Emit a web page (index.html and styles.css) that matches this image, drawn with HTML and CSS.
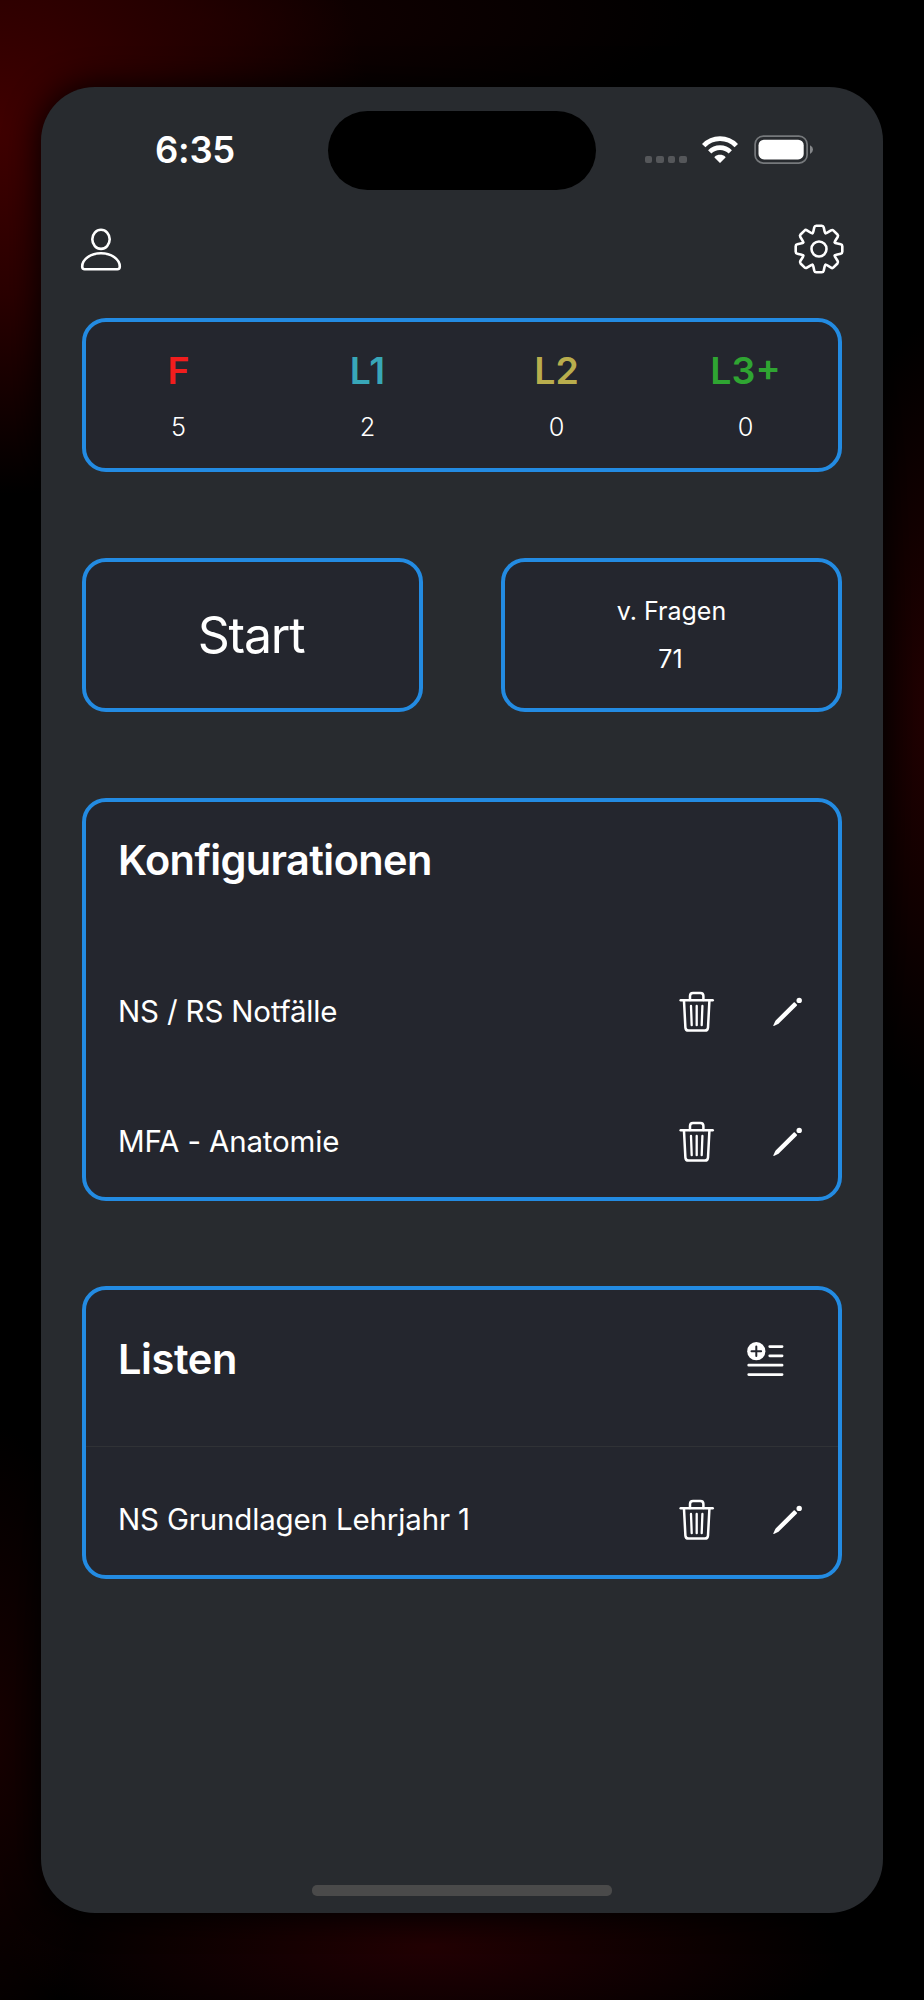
FILE: index.html
```html
<!DOCTYPE html>
<html lang="de">
<head>
<meta charset="utf-8">
<title>Lernkarten</title>
<link rel="stylesheet" href="styles.css">
</head>
<body>
<svg class="sprite" aria-hidden="true">
  <symbol id="trash" viewBox="0 0 36 42">
    <g fill="none" stroke="#fff" stroke-width="2.5" stroke-linecap="round" stroke-linejoin="round">
      <path d="M1.7 9.2H33.7"/>
      <path d="M11 9V5Q11 2 14 2H21.4Q24.4 2 24.4 5V9"/>
      <path d="M5 10L6.4 36.6Q6.6 39.6 9.6 39.6H25.8Q28.8 39.6 29 36.6L30.4 10"/>
      <path d="M12 15L12.7 34.2M17.7 15V34.2M23.4 15L22.7 34.2" stroke-width="2.3"/>
    </g>
  </symbol>
  <symbol id="pencil" viewBox="0 0 30 30">
    <path fill="#fff" d="M.9 28.9C.4 29.1.2 28.8.4 28.3L2.2 24.2Q2.5 23.6 2.9 23.2L20.7 5.6Q21.3 5 21.9 5.6L23.8 7.5Q24.4 8.1 23.8 8.7L6 26.3Q5.6 26.7 5 27Z"/>
    <circle cx="26.2" cy="3.4" r="2.7" fill="#fff"/>
  </symbol>
</svg>
<main class="phone">
  <header class="status">
    <div class="clock">6:35</div>
    <div class="island"></div>
    <div class="indicators">
      <div class="dots"><i></i><i></i><i></i><i></i></div>
      <svg class="wifi" viewBox="0 0 36 27">
        <path fill="#fff" d="M18 27L12.5 21.5Q12.2 21.1 12.7 20.7C15.5 18.1 20.5 18.1 23.3 20.7Q23.8 21.1 23.5 21.5Z"/>
        <path fill="none" stroke="#fff" stroke-width="4.6" d="M7.7 15.9C13.4 10.2 22.6 10.2 28.3 15.9"/>
        <path fill="none" stroke="#fff" stroke-width="4.8" d="M1.7 9.6C10.6.2 25.4.2 34.3 9.6"/>
      </svg>
      <svg class="battery" viewBox="0 0 60 30">
        <rect x="1.1" y="1.1" width="52" height="27" rx="8.2" fill="none" stroke="#76797c" stroke-width="1.7"/>
        <rect x="4.5" y="4.7" width="45.2" height="19.8" rx="5.6" fill="#fff"/>
        <path d="M56 10.3Q59 11.8 59 14.6T56 18.9Z" fill="#85878a"/>
      </svg>
    </div>
  </header>
  <nav class="toolbar">
    <svg class="person" viewBox="0 0 42 46">
      <g fill="none" stroke="#fff" stroke-width="2.6" stroke-linejoin="round">
        <ellipse cx="21" cy="12.3" rx="8.7" ry="9.6"/>
        <path d="M4.7 42.3Q2.2 42.3 2.2 39.5C2.2 32.5 10.4 26.3 21 26.3S39.8 32.5 39.8 39.5Q39.8 42.3 37.3 42.3Z"/>
      </g>
    </svg>
    <svg class="gear" viewBox="-25 -25 50 50">
      <defs><path id="tooth" d="M-6.5 -15.9Q-5.9 -16.5 -5.7 -17.3L-4.7 -21.7Q-4.3 -23.3 -2.8 -23.3H2.8Q4.3 -23.3 4.7 -21.7L5.7 -17.3Q5.9 -16.5 6.5 -15.9"/></defs>
      <g fill="none" stroke="#fff" stroke-width="2.6" stroke-linecap="round" stroke-linejoin="round">
        <use href="#tooth"/><use href="#tooth" transform="rotate(45)"/><use href="#tooth" transform="rotate(90)"/><use href="#tooth" transform="rotate(135)"/><use href="#tooth" transform="rotate(180)"/><use href="#tooth" transform="rotate(225)"/><use href="#tooth" transform="rotate(270)"/><use href="#tooth" transform="rotate(315)"/>
        <circle r="7.5"/>
      </g>
    </svg>
  </nav>
  <div class="content">
    <section class="card stats">
      <div class="stat"><b class="fail">F</b><span>5</span></div>
      <div class="stat"><b class="one">L1</b><span>2</span></div>
      <div class="stat"><b class="two">L2</b><span>0</span></div>
      <div class="stat"><b class="three">L3+</b><span>0</span></div>
    </section>
    <div class="actions">
      <section class="card start"><span>Start</span></section>
      <section class="card count"><span>v. Fragen</span><span class="num">71</span></section>
    </div>
    <section class="card configs">
      <h2>Konfigurationen</h2>
      <div class="row"><span>NS / RS Notfälle</span><svg class="trash"><use href="#trash"/></svg><svg class="pencil"><use href="#pencil"/></svg></div>
      <div class="row"><span>MFA - Anatomie</span><svg class="trash"><use href="#trash"/></svg><svg class="pencil"><use href="#pencil"/></svg></div>
    </section>
    <section class="card lists">
      <div class="list-head">
        <h2>Listen</h2>
        <svg class="add" viewBox="0 0 37 35">
          <circle cx="9.3" cy="9.2" r="9.1" fill="#fff"/>
          <path d="M9.3 4.4V14M4.5 9.2H14.1" stroke="#24262e" stroke-width="2" stroke-linecap="round"/>
          <path d="M22.7 4.6H35.1M22.7 13.8H35.1M1.7 23.2H35.1M1.7 32.6H35.1" stroke="#fff" stroke-width="2.7" stroke-linecap="round"/>
        </svg>
      </div>
      <div class="row"><span>NS Grundlagen Lehrjahr 1</span><svg class="trash"><use href="#trash"/></svg><svg class="pencil"><use href="#pencil"/></svg></div>
    </section>
  </div>
  <div class="home"></div>
</main>
</body>
</html>
```
FILE: styles.css
```css
* { box-sizing: border-box; }
body {
  margin: 0;
  height: 2000px;
  padding: 87px 41px;
  overflow: hidden;
  font-family: Inter, "Liberation Sans", sans-serif;
  color: #fff;
  background:
    radial-gradient(ellipse 380px 370px at -10px 130px, #400000, #2a0000 45%, transparent),
    radial-gradient(ellipse 500px 130px at 200px 20px, #150000, transparent),
    radial-gradient(ellipse 110px 400px at 934px 710px, #240002, transparent),
    radial-gradient(ellipse 420px 110px at 430px 1947px, #220003, transparent),
    radial-gradient(ellipse 110px 330px at -10px 1740px, #180000, transparent),
    #000;
}
svg { display: block; flex: none; }
.sprite { position: absolute; width: 0; height: 0; }
.phone {
  height: 1826px;
  background: #282b2f;
  border-radius: 54px;
  box-shadow: 0 0 34px #000;
  display: flex;
  flex-direction: column;
}
.status { display: grid; grid-template-columns: 287px 268px 287px; padding-top: 24px; height: 124px; }
.clock { font-size: 36.5px; font-weight: 600; line-height: 78px; padding-left: 114px; letter-spacing: -.3px; }
.island { height: 79px; border-radius: 40px; background: #000; }
.indicators { display: flex; padding-left: 49px; }
.dots { display: flex; gap: 4.2px; padding-top: 45px; }
.dots i { width: 7.3px; height: 7.3px; border-radius: 2px; background: #55575a; }
.wifi { width: 36px; height: 27px; margin: 25px 0 0 15.4px; }
.battery { width: 60px; height: 30px; margin: 24px 0 0 15.6px; }
.toolbar { display: flex; justify-content: space-between; padding: 13px 39px 0; height: 107px; }
.person { width: 42px; height: 46px; margin-top: 2.5px; }
.gear { width: 50px; height: 50px; }
.content { display: flex; flex-direction: column; gap: 86px; padding: 0 41px; }
.card { background: #24262e; border: 4px solid #238be2; border-radius: 24px; }
.stats { display: grid; grid-template-columns: repeat(4, 189px); justify-content: center; height: 154px; }
.stat { display: flex; flex-direction: column; align-items: center; padding-top: 24px; }
.stat b { font-size: 37.5px; font-weight: 600; line-height: 50px; }
.stat span { font-size: 25.3px; font-weight: 300; line-height: 30px; margin-top: 16px; }
.fail { color: #f21d1d; }
.one { color: #38a7b8; }
.two { color: #b9ad4d; }
.three { color: #2fa532; }
.actions { display: flex; justify-content: space-between; }
.actions .card { width: 341px; height: 154px; }
.start { display: flex; justify-content: center; font-size: 50px; line-height: 147px; padding-right: 3px; }
.start span { letter-spacing: -1.2px; }
.count { display: flex; flex-direction: column; align-items: center; font-size: 25px; padding-top: 25px; line-height: 48px; }
.count .num { padding-right: 2px; }
.configs { height: 403px; padding: 26px 35px 0 32px; }
h2 { margin: 0; font-size: 41.5px; font-weight: 600; line-height: 64px; letter-spacing: -.6px; }
.row { display: flex; align-items: center; height: 130px; font-size: 29.5px; }
.row span { flex: 1; letter-spacing: -.16px; padding-bottom: 2px; }
.row .trash { width: 36px; height: 42px; }
.row .pencil { width: 30px; height: 30px; margin-left: 58px; }
.configs h2 { margin-bottom: 55px; }
.lists { height: 293px; margin-top: -1px; }
.list-head { display: flex; justify-content: space-between; align-items: flex-start; height: 157px; padding: 37px 54px 0 32px; border-bottom: 1px solid #303236; }
.list-head h2 { letter-spacing: -.4px; }
.add { width: 37px; height: 35px; margin-top: 15px; }
.lists .row { height: 145px; padding: 0 35px 0 32px; }
.home { width: 300px; height: 11px; border-radius: 5px; background: #4a4a4a; margin: auto auto 17px; }
```
